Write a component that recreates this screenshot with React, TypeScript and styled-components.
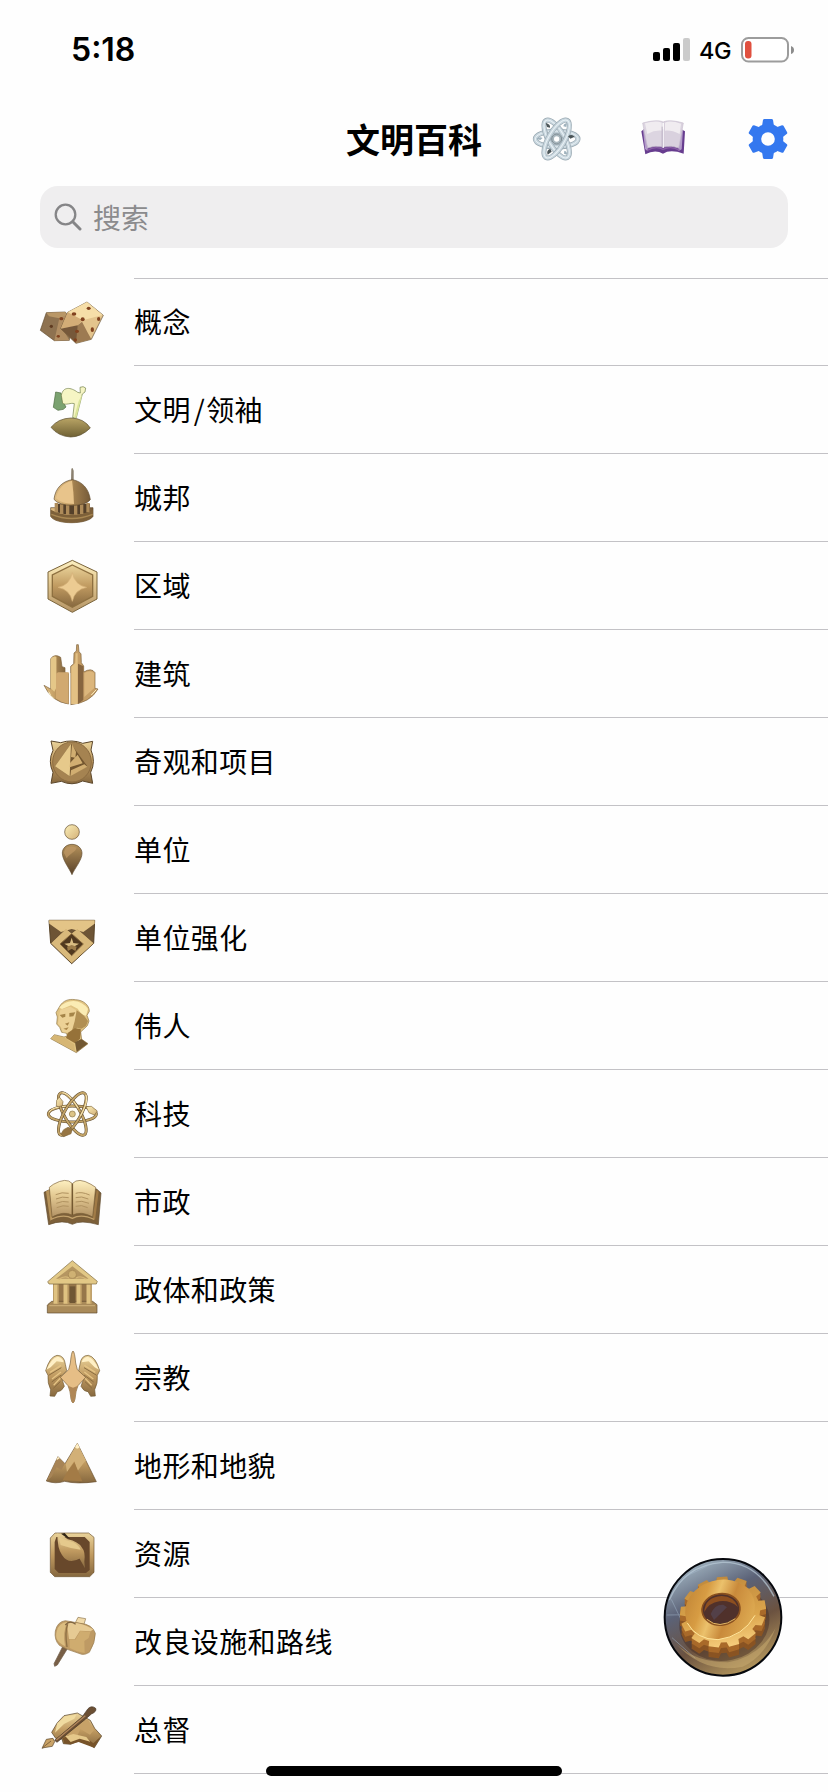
import React, { FC, ReactNode } from 'react';
import styled, { createGlobalStyle } from 'styled-components';

const GlobalStyle = createGlobalStyle`
  * {
    box-sizing: border-box;
  }

  body {
    margin: 0;
    background: #fefefe;
    font-family: 'Noto Sans CJK SC', sans-serif;
    color: #000;
  }
`;

const Screen = styled.div`
  position: relative;
  width: 828px;
  height: 1792px;
  overflow: hidden;
  background: #fefefe;
`;

const StatusBar = styled.div`
  display: flex;
  justify-content: space-between;
  align-items: center;
  height: 100px;
  padding: 0 34px 0 71px;
`;

const Clock = styled.span`
  font-family: Inter, sans-serif;
  font-size: 32px;
  font-weight: 600;
  line-height: 40px;
`;

const StatusIcons = styled.div`
  display: flex;
  align-items: center;
`;

const Network = styled.span`
  margin: 2px 10px 0 8px;
  width: 32px;
  font-family: Inter, sans-serif;
  font-size: 23.5px;
  font-weight: 500;
  line-height: 28px;
  letter-spacing: -0.3px;
`;

const NavBar = styled.header`
  display: flex;
  align-items: center;
  height: 78px;
  padding-left: 346px;
`;

const Title = styled.h1`
  margin: 0;
  width: 186px;
  font-size: 34px;
  font-weight: 700;
  line-height: 48px;
`;

const NavButton = styled.button<{ $gap: number }>`
  display: flex;
  margin: 0 ${(p) => p.$gap}px 0 0;
  padding: 0;
  border: 0;
  background: none;
`;

const SearchField = styled.div`
  display: flex;
  align-items: center;
  gap: 10px;
  height: 62px;
  margin: 8px 40px 30px;
  padding-left: 14px;
  border-radius: 18px;
  background: #efeeef;
`;

const Placeholder = styled.span`
  font-size: 28px;
  line-height: 40px;
  color: #8b8b8d;
`;

const List = styled.ul`
  margin: -1px 0 0;
  padding: 0;
  list-style: none;
`;

const Divider = styled.div`
  height: 1px;
  margin-left: 134px;
  background: #c3c2c6;
`;

const Row = styled.li`
  display: flex;
  height: 88px;
`;

const IconCell = styled.div`
  width: 134px;
  padding-left: 30px;
`;

const Label = styled.span`
  flex: 1;
  border-bottom: 1px solid #c3c2c6;
  font-size: 28px;
  line-height: 86px;
  letter-spacing: 0.4px;
`;

const Slash = styled.span`
  margin: 0 1px 0 3px;
`;

const FloatingButton = styled.button`
  position: absolute;
  left: 650px;
  top: 1540px;
  width: 150px;
  height: 150px;
  padding: 0;
  border: 0;
  background: none;
`;

const HomeIndicator = styled.div`
  position: absolute;
  left: 266px;
  bottom: 16px;
  width: 296px;
  height: 10px;
  border-radius: 5px;
  background: #000;
`;

const HiddenDefs = styled.svg`
  position: absolute;
`;

const Gradients: FC = () => (
  <HiddenDefs width="0" height="0">
    <defs>
      <linearGradient id="gold" x1="0" y1="0" x2="0" y2="1">
        <stop offset="0" stopColor="#ead39a" />
        <stop offset="0.5" stopColor="#c09a60" />
        <stop offset="1" stopColor="#86683f" />
      </linearGradient>
      <linearGradient id="light" x1="0" y1="0" x2="1" y2="1">
        <stop offset="0" stopColor="#fbefb9" />
        <stop offset="1" stopColor="#d3b077" />
      </linearGradient>
      <linearGradient id="dark" x1="0" y1="0" x2="0" y2="1">
        <stop offset="0" stopColor="#b5925b" />
        <stop offset="1" stopColor="#59422a" />
      </linearGradient>
      <linearGradient id="side" x1="0" y1="0" x2="1" y2="0">
        <stop offset="0" stopColor="#dfbd83" />
        <stop offset="0.45" stopColor="#c39d63" />
        <stop offset="0.55" stopColor="#a17f4e" />
        <stop offset="1" stopColor="#765b39" />
      </linearGradient>
      <linearGradient id="page" x1="0" y1="0" x2="0" y2="1">
        <stop offset="0" stopColor="#fdf0c1" />
        <stop offset="0.4" stopColor="#e5cb94" />
        <stop offset="1" stopColor="#b39365" />
      </linearGradient>
      <linearGradient id="hill" x1="0" y1="0" x2="0" y2="1">
        <stop offset="0" stopColor="#b9a465" />
        <stop offset="1" stopColor="#6f6134" />
      </linearGradient>
    </defs>
  </HiddenDefs>
);

const LINE = '#5f4a2e';

const DiceIcon = () => (
  <g>
    <path d="M49 107 106 105 122 130 118 190 73 191 31 160Z" fill="#8e7250" stroke={LINE} strokeWidth="2" />
    <path d="M49 107 106 105 112 116 88 124 57 118Z" fill="#b99767" />
    <path d="M88 124 112 113 98 155 118 190 73 191Z" fill="#b18e63" />
    <path d="M113 106 171 75 220 115 184 187 138 199 92 155Z" fill="#e3c48d" stroke={LINE} strokeWidth="2" />
    <path d="M113 106 171 75 218 114 158 130Z" fill="#f6dea8" />
    <path d="M113 106 158 130 141 146 92 155Z" fill="#d3ad77" />
    <path d="M92 155 143 145 152 160 138 199Z" fill="#76583a" />
    <path d="M143 145 156 134 172 165 184 187 138 199Z" fill="#9d7b52" />
    <g fill="#81421f">
      <ellipse cx="176" cy="94" rx="6" ry="5" />
      <ellipse cx="132" cy="111" rx="7" ry="5" />
      <ellipse cx="158" cy="127" rx="6" ry="6" />
      <ellipse cx="206" cy="126" rx="5" ry="6" />
      <ellipse cx="187" cy="158" rx="5" ry="7" />
      <ellipse cx="141" cy="163" rx="6" ry="5" />
      <ellipse cx="136" cy="189" rx="5" ry="5" />
      <ellipse cx="94" cy="125" rx="6" ry="5" />
      <ellipse cx="64" cy="148" rx="5" ry="5" fill="#5f3b20" />
      <ellipse cx="85" cy="178" rx="5" ry="4" />
    </g>
  </g>
);

const FlagIcon = () => (
  <g>
    <path d="M77 81 93 84 98 108 108 126 100 133 84 136 70 127Z" fill="#7ba270" stroke="#4b6a3e" strokeWidth="2" />
    <path d="M94 91C99 64 122 66 143 82L151 84 150 67Q160 62 167 69L165 81 157 87 139 158 128 158 133 116C123 112 108 122 98 115Z" fill="#f6f5c4" stroke="#6d7c45" strokeWidth="2" />
    <path d="M146 108 157 88 139 158 132 158Z" fill="#dbe59b" />
    <path d="M63 187Q85 160 123 159 162 160 181 189 153 216 122 216 85 214 63 187Z" fill="url(#hill)" stroke="#554725" strokeWidth="2" />
  </g>
);

const DomeIcon = () => (
  <g>
    <path d="M123 83 124 47 128 45 131 53 131 83Z" fill="#8b8170" />
    <path d="M62 164V190C76 216 174 215 189 190V164Z" fill="url(#side)" stroke={LINE} strokeWidth="2" />
    <path d="M62 170Q126 202 189 170V190C174 215 76 216 62 190Z" fill="#7d6039" />
    <path d="M75 152H180V176Q126 193 75 176Z" fill="#54402a" />
    <path d="M79 150v28M95 154v29M113 156v29M137 156v29M155 154v29M174 150v28" stroke="#ae8b59" strokeWidth="10" />
    <path d="M72 139C76 104 99 84 127 80 155 85 176 105 181 140 165 163 88 163 72 139Z" fill="url(#side)" stroke={LINE} strokeWidth="2" />
    <path d="M78 136C84 105 104 88 126 83L130 118 132 153Q96 153 78 136Z" fill="#e8c48b" />
    <path d="M64 184Q125 209 188 184" stroke="#a98853" strokeWidth="4" fill="none" />
  </g>
);

const HexIcon = () => (
  <g>
    <path d="M127 58 201 93V174L127 214 54 174V93Z" fill="url(#page)" stroke="#7a643b" strokeWidth="3" />
    <path d="M127 72 188 102V166L127 199 67 166V102Z" fill="url(#gold)" stroke="#8e7040" strokeWidth="4" />
    <path d="M127 95Q134 132 170 139 134 146 127 181 120 146 84 139 120 132 127 95Z" fill="#eccb92" stroke="#d6b27a" strokeWidth="2" />
  </g>
);

const BuildingsIcon = () => (
  <g>
    <path d="M42 169 62 180V89Q74 73 92 85L96 113 105 116V131L116 134V225Q65 219 42 169Z" fill="url(#side)" stroke="#7b603b" strokeWidth="2" />
    <path d="M62 90Q70 79 79 84V176L73 188 62 178Z" fill="#e5c788" />
    <path d="M78 134 84 130H116V225Q96 222 78 209Z" fill="#d1a970" />
    <path d="M122 227V112L131 104 132 72 139 66 140 47 145 47 147 69 153 74 154 101 161 111V129Q185 115 195 131V178L204 180Q180 222 122 227Z" fill="#c69e66" stroke="#7b603b" strokeWidth="2" />
    <path d="M124 225V113L136 102 137 73 143 73V225Z" fill="#e3c184" />
    <path d="M144 104 160 112V213L144 225Z" fill="#87653f" />
    <path d="M163 132Q178 121 193 132V177L163 204Z" fill="#dcb67c" />
    <path d="M119 132V227" stroke="#fefefe" strokeWidth="4" />
    <path d="M56 188Q60 199 72 209M184 198l15-16" stroke="#fff1c2" strokeWidth="3" fill="none" />
  </g>
);

const WonderIcon = () => (
  <g>
    <path d="M63 72 92 77Q126 66 158 79L188 73 183 99Q198 134 182 166L188 199 158 192Q126 208 94 193L63 199 69 166Q53 133 69 100Z" fill="url(#gold)" stroke="#5b462a" strokeWidth="3" />
    <ellipse cx="126" cy="135" rx="58" ry="60" fill="#a58351" stroke="#8b6b40" strokeWidth="3" />
    <path d="M123 80 75 148 119 178 172 148Z" fill="#73562f" />
    <path d="M123 80 75 148 119 178Z" fill="#e6c98b" />
    <path d="M126 81 138 105 136 122 123 120ZM143 113 158 139 119 151 120 138ZM163 142 172 149 121 178 123 160Z" fill="#d1ae71" />
  </g>
);

const UnitIcon = () => (
  <g stroke={LINE} strokeWidth="2">
    <circle cx="126" cy="81" r="22" fill="url(#light)" />
    <path d="M126 118C108 118 97 131 97 144 97 165 118 190 126 209 134 190 156 165 156 145 156 131 144 118 126 118Z" fill="url(#dark)" />
    <path d="M102 144C104 125 122 121 140 128 136 142 120 144 110 160Z" fill="#c29a66" opacity="0.7" stroke="none" />
  </g>
);

const PromotionIcon = () => (
  <g>
    <path d="M57 82H194L191 151 125 212 62 151Z" fill="#6d5435" stroke="#574226" strokeWidth="3" />
    <path d="M57 82H194V92L160 117 125 108 93 117 58 92Z" fill="#e3c487" />
    <path d="M64 151 108 109 125 122 142 109 190 151 125 210Z" fill="#c5a367" />
    <path d="M108 109 125 122 92 152 125 182 158 152 125 122 142 109 190 151 125 210 64 151Z" fill="#d9b97b" />
    <path d="M125 122 160 153 125 188 90 153Z" fill="#51391f" stroke="#8d6e40" strokeWidth="3" />
    <path d="M125 134 130 150 147 152 134 160 137 172 125 166 113 172 116 160 103 152 120 150Z" fill="#d9bc82" />
    <path d="M111 161 125 156 140 161 136 174 125 167 114 174Z" fill="#9c7b49" />
  </g>
);

const BustIcon = () => (
  <g>
    <path d="M89 76C99 59 115 53 136 56 161 57 178 73 178 91L171 103 177 120 172 134 152 153 155 175 174 188 139 215 62 173 73 161 102 168 113 164 108 156 95 154 89 139 80 129 82 108 78 95Z" fill="#e0c382" stroke="#8f7546" strokeWidth="2" />
    <path d="M88 80Q104 60 130 60 158 61 174 84L168 104 155 100 143 83 123 73 96 84Z" fill="#fbecb4" />
    <path d="M91 86 121 77 139 88 144 112 124 156 98 154 93 138 84 128 87 106Z" fill="#ecd196" />
    <path d="M140 88 155 98 162 104 174 120 168 135 154 143 142 140 124 156 134 121Z" fill="#b18f53" />
    <path d="M89 102 106 98 106 107 97 110ZM118 96 136 94 130 106 118 107Z" fill="#a58448" />
    <path d="M105 128 118 124 113 134ZM100 143 116 139 110 147Z" fill="#a98549" />
    <path d="M113 156 134 142 152 144 152 156 150 173 135 187 108 171Z" fill="#967239" />
    <path d="M135 184 154 174 173 188 140 213Z" fill="#725832" />
    <path d="M63 172 74 163 105 171 132 190 135 211Z" fill="#d6b674" />
  </g>
);

const ScienceIcon = () => (
  <g fill="none">
    {[0, 60, 120].map((angle) => (
      <g key={angle} transform={`rotate(${angle} 127 135)`}>
        <ellipse cx="127" cy="135" rx="72" ry="24" stroke="#5e4b2d" strokeWidth="9" />
        <ellipse cx="127" cy="135" rx="72" ry="24" stroke="#c3a468" strokeWidth="6" />
        <path d="M57 129Q66 112 120 111" stroke="#fbe9b4" strokeWidth="3" />
      </g>
    ))}
    <g fill="url(#light)" stroke="#846a3c" strokeWidth="2">
      <path d="M79 111 80 94 88 84 99 98 97 110 86 113Z" />
      <path d="M168 113 184 112 202 126 193 138 177 131Z" />
      <path d="M93 195 101 182 114 175 127 179 123 194 101 203Z" fill="#967543" />
    </g>
    <circle cx="127" cy="135" r="18" fill="#fffdf5" />
    <circle cx="127" cy="135" r="9" fill="#ddc486" stroke="#8a7243" strokeWidth="2" />
  </g>
);

const BookIcon = () => (
  <g>
    <path d="M42 106 58 98 200 96 213 108 205 203Q152 188 127 202 99 187 56 203Z" fill="#7d6039" stroke={LINE} strokeWidth="2" />
    <path d="M48 103 58 98 67 184 61 192Z" fill="#b8945b" />
    <path d="M206 104 200 98 188 184 195 190Z" fill="#a17b47" />
    <path d="M58 91 70 82Q109 60 126 79V174Q101 161 66 180Z" fill="url(#page)" stroke="#7c6038" strokeWidth="2" />
    <path d="M197 91 183 82Q145 60 128 79V174Q154 161 188 180Z" fill="url(#page)" stroke="#7c6038" strokeWidth="2" />
    <path d="M63 187Q101 169 127 184 154 169 192 187" stroke="#c3a26c" strokeWidth="4" fill="none" />
    <path d="M77 113q19-9 39-4M78 126q19-9 38-4M79 139q19-9 37-4M80 152q20-9 36-4M137 109q17-6 42 5M137 122q17-6 38 4M137 135q17-6 40 4M137 148q17-6 36 4" stroke="#b09260" strokeWidth="3" fill="none" />
    <path d="M127 80v94" stroke="#70552d" strokeWidth="3" />
  </g>
);

const TempleIcon = () => (
  <g>
    <path d="M69 116H185V184H69Z" fill="#96764a" />
    <path d="M54 178 65 169H188L201 179V204H52V181Z" fill="#a98a59" stroke={LINE} strokeWidth="2" />
    <path d="M58 182H195" stroke="#c8aa75" strokeWidth="4" />
    <path d="M119 124H136V174H119Z" fill="#6f5634" />
    <path d="M78 118v58M108 118v58M147 118v58M177 118v58" stroke="#dfc281" strokeWidth="15" />
    <path d="M84 118v58M114 118v58M153 118v58M183 118v58" stroke="#b18f59" strokeWidth="3" />
    <path d="M127 47 202 109 199 117H57L53 110Z" fill="#e2c886" stroke="#7c683f" strokeWidth="2" />
    <path d="M127 64 176 101H78Z" fill="#b59661" />
    <circle cx="127" cy="88" r="12" fill="#cfb173" stroke="#a28350" strokeWidth="2" />
    <path d="M86 103q18-12 31-4M138 99q16-8 31 4" stroke="#d5b778" strokeWidth="4" fill="none" />
  </g>
);

const Wing = () => (
  <g>
    <path d="M47 113Q59 71 81 67 103 67 106 94L110 113 94 130Q98 147 103 160 94 177 82 176L74 190 60 189 62 170Q52 151 54 127Z" fill="url(#gold)" stroke="#705731" strokeWidth="2" />
    <path d="M49 110Q65 73 84 71 98 74 101 88L80 85 62 103Z" fill="#fff0c6" />
    <path d="M56 127 94 104M65 147 94 126M70 166 91 146" stroke="#8b6d40" strokeWidth="3" />
    <path d="M60 118 93 97M66 138 93 117M71 157 91 136" stroke="#e5c485" strokeWidth="4" />
  </g>
);

const ReligionIcon = () => (
  <g>
    <Wing />
    <g transform="translate(256 0) scale(-1 1)">
      <Wing />
    </g>
    <path d="M129 54Q134 56 137 90L142 110 167 133 144 158Q137 172 135 198 133 208 129 210 125 208 123 198 121 172 114 158L91 133 116 110 121 90Q124 56 129 54Z" fill="#e6be86" stroke="#7a603a" strokeWidth="2" />
    <path d="M114 158Q121 172 123 198 125 208 129 210 133 208 135 198 137 172 144 158L129 164Z" fill="#b08756" />
  </g>
);

const MountainIcon = () => (
  <g>
    <path d="M49 180 84 107 105 128 142 67 199 182Q140 190 104 181 76 190 49 180Z" fill="url(#gold)" stroke="#654c2c" strokeWidth="2" />
    <path d="M84 107 104 129 94 147 80 139 65 167 50 180Z" fill="#a78456" />
    <path d="M142 68 107 128 111 153 133 120 142 151 161 126 168 119Z" fill="#d2b077" />
    <path d="M133 123 109 157 98 178 157 181 146 154Z" fill="#a37b46" />
    <path d="M84 107 89 112 82 116 79 116ZM142 67 149 80 141 83 135 79Z" fill="#ffefc5" />
  </g>
);

const ResourceIcon = () => (
  <g>
    <path d="M75 72H176L192 85V190L179 203H74L61 190V87Z" fill="url(#gold)" stroke="#6f5634" strokeWidth="2" />
    <path d="M79 84H164L179 99V183L168 192H86L74 180V99Z" fill="#68482b" />
    <path d="M82 73Q98 79 113 91 145 98 155 115 167 128 163 158L165 178 151 153 145 140 151 148Q115 168 96 138 82 120 82 73Z" fill="url(#gold)" />
    <path d="M86 84Q108 96 130 100 146 108 152 122 120 118 92 108Z" fill="#e5c98c" />
    <path d="M93 74 104 72Q114 83 121 91 104 83 93 74Z" fill="#302414" />
  </g>
);

const MalletIcon = () => (
  <g>
    <path d="M98 149 113 154 82 204 74 208 72 200Z" fill="#785f46" stroke="#6a5642" strokeWidth="2" />
    <path d="M136 77 144 61 167 65 162 82Z" fill="#f1daa9" stroke="#8c744d" strokeWidth="2" />
    <path d="M76 102Q82 74 106 71L123 74 151 79Q188 82 196 109 196 137 178 166 166 174 155 172L112 157 88 145Q72 128 76 102Z" fill="#be9a64" stroke="#957a4d" strokeWidth="2" />
    <path d="M80 104Q86 77 112 75 97 106 105 147 72 132 80 104Z" fill="#dbbd80" />
    <path d="M111 79Q148 71 190 97L182 103 150 101 134 127 117 126Z" fill="#e6ca93" />
    <path d="M151 102 181 105 176 123 163 132 164 168 141 163 119 153 119 127 136 128Z" fill="#cfac6f" />
    <path d="M113 82Q104 104 111 150" stroke="#8d6f43" strokeWidth="4" fill="none" />
    <path d="M106 84Q119 68 137 82" stroke="#806542" strokeWidth="4" fill="none" />
  </g>
);

const WritingIcon = () => (
  <g>
    <path d="M65 142 82 113 102 92 142 84 181 106 194 130 215 153 193 188 176 178 145 168 122 178 100 176 96 162 77 160Z" fill="url(#gold)" stroke="#4d3920" strokeWidth="2" />
    <path d="M82 115 105 94 139 89 133 101 102 117 75 143Z" fill="#f0dba0" />
    <path d="M104 142 139 115 173 101 192 136 180 149 151 132 142 153 115 164Z" fill="#c7a268" />
    <path d="M98 160 115 151 141 153 169 158 190 175 213 154 192 188 146 171 122 178 103 175Z" fill="#775329" />
    <path d="M106 154 130 147 169 156 181 170 149 161 122 171Z" fill="#e5c88a" />
    <path d="M74 166 157 95 174 71Q185 60 197 70 201 80 184 87L167 102 81 172Z" fill="#6b4f34" stroke="#413020" strokeWidth="2" />
    <path d="M79 165 166 92" stroke="#b1865b" strokeWidth="4" />
    <path d="M36 190 49 163 69 160 74 170 67 184 42 188Z" fill="#caa367" stroke="#554125" strokeWidth="2" />
    <path d="M39 187 63 168" stroke="#5b4325" strokeWidth="2" />
  </g>
);

interface Category {
  name: ReactNode;
  Icon: FC;
}

const categories: Category[] = [
  { name: '概念', Icon: DiceIcon },
  { name: <>文明<Slash>/</Slash>领袖</>, Icon: FlagIcon },
  { name: '城邦', Icon: DomeIcon },
  { name: '区域', Icon: HexIcon },
  { name: '建筑', Icon: BuildingsIcon },
  { name: '奇观和项目', Icon: WonderIcon },
  { name: '单位', Icon: UnitIcon },
  { name: '单位强化', Icon: PromotionIcon },
  { name: '伟人', Icon: BustIcon },
  { name: '科技', Icon: ScienceIcon },
  { name: '市政', Icon: BookIcon },
  { name: '政体和政策', Icon: TempleIcon },
  { name: '宗教', Icon: ReligionIcon },
  { name: '地形和地貌', Icon: MountainIcon },
  { name: '资源', Icon: ResourceIcon },
  { name: '改良设施和路线', Icon: MalletIcon },
  { name: '总督', Icon: WritingIcon },
];

const SignalIcon = () => (
  <svg width="38" height="24" viewBox="0 0 38 24">
    <rect x="0" y="14" width="7" height="9" rx="2" />
    <rect x="10" y="10" width="7" height="13" rx="2" />
    <rect x="20" y="5" width="7" height="18" rx="2" />
    <rect x="30" y="0" width="7" height="23" rx="2" fill="#cbcbcb" />
  </svg>
);

const BatteryIcon = () => (
  <svg width="53" height="26" viewBox="0 0 53 26">
    <rect x="1" y="1" width="46" height="23.5" rx="6.5" fill="#fff" stroke="#9c9c9c" strokeWidth="2" />
    <rect x="4" y="4" width="6.5" height="17.5" rx="3" fill="#e0503f" />
    <path d="M50 9q3 1 3 4t-3 4z" fill="#8c8c8c" />
  </svg>
);

const SilverAtom = () => (
  <svg width="50" height="48" viewBox="0 0 150 144" fill="none">
    <circle cx="74" cy="72" r="36" fill="#c3d0d8" />
    {[0, 60, 120].map((angle) => (
      <g key={angle} transform={`rotate(${angle} 74 72)`}>
        <ellipse cx="74" cy="72" rx="64" ry="24" stroke="#9aa9b2" strokeWidth="15" />
        <ellipse cx="74" cy="72" rx="64" ry="24" stroke="#c8d6de" strokeWidth="11" />
        <ellipse cx="74" cy="72" rx="64" ry="24" stroke="#e9f1f5" strokeWidth="3" />
      </g>
    ))}
    <path d="M41 24q15 3 13 14l-9-2zM128 65q-9-9-20-1l7 7zM47 119q-5-13 8-18l4 9z" fill="#4b5558" />
    <path d="M13 72q9-9 19-3l-7 6zM94 34q2-10 11-9l-2 11zM97 107q9 2 8 12l-9-3z" fill="#9fb2bd" />
    <circle cx="74" cy="72" r="15" fill="#a8b6bd" stroke="#7f8d94" strokeWidth="3" />
    <circle cx="74" cy="72" r="8" fill="#fff" />
  </svg>
);

const PurpleBook = () => (
  <svg width="46" height="38" viewBox="0 0 138 114">
    <path d="M4 34 12 28H124L135 34 131 101Q91 87 69 101 45 87 16 103Z" fill="#673d8f" />
    <path d="M9 29 18 28 24 94 15 87ZM129 30 118 28 115 94 125 88Z" fill="#b39bc9" />
    <path d="M8 9Q48-2 68 5V81Q45 75 23 84Z" fill="#dcd5e1" stroke="#c9c0ce" strokeWidth="2" />
    <path d="M130 9Q91-2 71 5V81Q94 75 116 84Z" fill="#d9d1de" stroke="#c9c0ce" strokeWidth="2" />
    <path d="M15 10Q50 0 65 8V32Q44 30 22 42ZM123 11Q91 0 75 8V32Q95 30 119 42Z" fill="#f0ecf0" />
    <path d="M20 92Q48 76 69 88 94 76 119 91" stroke="#8a5fa6" strokeWidth="4" fill="none" />
    <path d="M69.500 9V84" stroke="#ffffff" strokeWidth="4" />
    <path d="M66.500 20V82" stroke="#a99db3" strokeWidth="2" />
  </svg>
);

const SettingsGear = () => (
  <svg width="42" height="42" viewBox="-63 -63 126 126">
    <g fill="#3478ef">
      <circle r="46" />
      {[0, 60, 120, 180, 240, 300].map((angle) => (
        <path key={angle} d="M-18 -38 -15 -57Q-14 -60 -11 -60H11Q14 -60 15 -57L18 -38Z" transform={`rotate(${angle})`} />
      ))}
    </g>
    <circle r="20.500" fill="#fefefe" />
  </svg>
);

const SearchIcon = () => (
  <svg width="29" height="28" viewBox="0 0 29 28" fill="none" stroke="#858587" strokeLinecap="round">
    <circle cx="11.500" cy="11.500" r="9.800" strokeWidth="2.300" />
    <path d="M18.800 18.800 26 26" strokeWidth="3" />
  </svg>
);

// Outline of a tilted cog, drawn on an ellipse
const cogPath = (teeth: number, rx: number, ry: number, depth: number): string => {
  const points: string[] = [];
  const step = (Math.PI * 2) / teeth;
  for (let i = 0; i < teeth; i++) {
    const profile = [
      [-0.34, 1 - depth],
      [-0.25, 1],
      [0.25, 1],
      [0.34, 1 - depth],
    ];
    profile.forEach(([offset, r]) => {
      const a = (i + offset) * step;
      points.push(`${(Math.cos(a) * rx * r).toFixed(1)} ${(Math.sin(a) * ry * r).toFixed(1)}`);
    });
  }
  return `M${points.join('L')}Z`;
};

const COG_LAYERS = [34, 30, 26, 22, 18, 14, 10, 6];

const BronzeCog = () => {
  const cog = cogPath(13, 130, 106, 0.14);
  return (
    <svg width="150" height="150" viewBox="0 0 450 450">
      <defs>
        <linearGradient id="disc" x1="0.200" y1="0" x2="0.700" y2="1">
          <stop offset="0" stopColor="#a9bdc9" />
          <stop offset="0.350" stopColor="#5b6277" />
          <stop offset="0.650" stopColor="#6b5240" />
          <stop offset="1" stopColor="#b99b5e" />
        </linearGradient>
        <linearGradient id="cogFace" x1="0" y1="0" x2="1" y2="0.600">
          <stop offset="0" stopColor="#b97d32" />
          <stop offset="0.350" stopColor="#d79c43" />
          <stop offset="0.500" stopColor="#ebc16c" />
          <stop offset="0.700" stopColor="#c98a3b" />
          <stop offset="1" stopColor="#dca850" />
        </linearGradient>
        <linearGradient id="cogTeeth" x1="0" y1="0" x2="0" y2="1">
          <stop offset="0" stopColor="#c08a3d" />
          <stop offset="0.600" stopColor="#dba54c" />
          <stop offset="1" stopColor="#f6cd7c" />
        </linearGradient>
      </defs>
      <circle cx="219" cy="232" r="175" fill="url(#disc)" stroke="#06080d" strokeWidth="6" />
      <path d="M58 180Q102 76 217 67 318 64 372 169" stroke="#b9cbd7" strokeWidth="4" fill="none" opacity="0.7" />
      <path d="M50 225 132 224M64 178 120 295M101 112 172 78M66 293 136 355" stroke="#a9bed2" strokeWidth="3" opacity="0.45" />
      <path d="M77 310Q160 403 278 380 344 350 377 264 328 350 234 367 134 367 77 310Z" fill="#cbae71" opacity="0.5" />
      <ellipse cx="223" cy="248" rx="136" ry="114" fill="#422b22" opacity="0.45" transform="rotate(-12 223 248)" />
      {COG_LAYERS.map((depth) => (
        <g key={depth} transform={`translate(219 ${214 + depth}) rotate(-10)`}>
          <path d={cog} fill={depth > 20 ? '#8a5423' : '#a96a2a'} />
        </g>
      ))}
      <g transform="translate(219 216) rotate(-10)">
        <path d={cog} fill="url(#cogTeeth)" />
      </g>
      <ellipse cx="210" cy="208" rx="106" ry="88" fill="url(#cogFace)" transform="rotate(-16 210 208)" />
      <path d="M112 249Q139 299 204 299 280 289 315 226" stroke="#ffe59b" strokeWidth="3" fill="none" />
      <ellipse cx="213" cy="208" rx="57" ry="47" fill="#50312b" stroke="#89501f" strokeWidth="5" transform="rotate(-7 213 208)" />
      <path d="M163 216Q164 172 215 168 252 169 264 201 240 180 208 184 177 188 163 216Z" fill="#8d4f20" />
      <path d="M182 222q12-30 38-28l11 8-39 38z" fill="#555066" opacity="0.5" />
      <path d="M171 238Q207 270 256 236" stroke="#e1b664" strokeWidth="3" fill="none" />
    </svg>
  );
};

const App: FC = () => {
  return (
    <Screen>
      <GlobalStyle />
      <Gradients />
      <StatusBar>
        <Clock>5:18</Clock>
        <StatusIcons>
          <SignalIcon />
          <Network>4G</Network>
          <BatteryIcon />
        </StatusIcons>
      </StatusBar>
      <NavBar>
        <Title>文明百科</Title>
        <NavButton $gap={58}>
          <SilverAtom />
        </NavButton>
        <NavButton $gap={61}>
          <PurpleBook />
        </NavButton>
        <NavButton $gap={0}>
          <SettingsGear />
        </NavButton>
      </NavBar>
      <SearchField>
        <SearchIcon />
        <Placeholder>搜索</Placeholder>
      </SearchField>
      <Divider />
      <List>
        {categories.map(({ name, Icon }, index) => (
          <Row key={index}>
            <IconCell>
              <svg width="84" height="88" viewBox="0 3 252 264">
                <Icon />
              </svg>
            </IconCell>
            <Label>{name}</Label>
          </Row>
        ))}
      </List>
      <FloatingButton>
        <BronzeCog />
      </FloatingButton>
      <HomeIndicator />
    </Screen>
  );
};

export default App;
